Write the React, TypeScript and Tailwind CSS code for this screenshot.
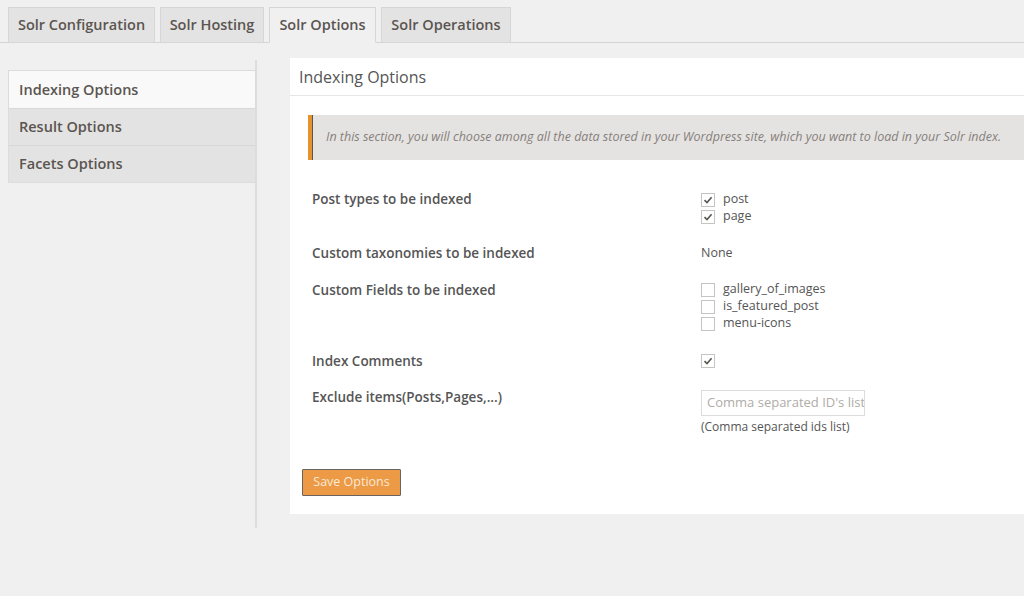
import React from "react";

const font = { fontFamily: '"Open Sans", "Liberation Sans", sans-serif' };

const tabs = [
  { name: "Solr Configuration", w: "w-[147px]" },
  { name: "Solr Hosting", w: "w-[104px]" },
  { name: "Solr Options", w: "w-[107px]", active: true },
  { name: "Solr Operations", w: "w-[130px]" },
];

const sideItems = [
  { name: "Indexing Options", active: true },
  { name: "Result Options" },
  { name: "Facets Options" },
];

function Check({ checked }: { checked?: boolean }) {
  return (
    <span className="w-[14px] h-[14px] border border-[#c4c4c4] bg-white flex items-center justify-center shrink-0">
      {checked && (
        <svg width="10" height="10" viewBox="0 0 10 10">
          <path d="M1.5 5.2 L4 7.6 L8.6 2.2" fill="none" stroke="#5a5550" strokeWidth="1.6" />
        </svg>
      )}
    </span>
  );
}

function CheckLine({ label, checked }: { label: string; checked?: boolean }) {
  return (
    <div className="h-[17px] flex items-center gap-[8px]">
      <Check checked={checked} />
      <span className="text-[12.5px] text-[#555]">{label}</span>
    </div>
  );
}

function Row({ label, h, children }: { label: string; h: string; children?: React.ReactNode }) {
  return (
    <div className={`flex ${h}`}>
      <div className="w-[411px] shrink-0 pl-[22px] text-[13.5px] font-semibold text-[#555] leading-[20px]">{label}</div>
      <div className="flex-1">{children}</div>
    </div>
  );
}

export default function App() {
  return (
    <div className="w-[1024px] h-[596px] bg-[#f1f0f1] overflow-hidden" style={font}>
      {/* tabs */}
      <div className="flex gap-[5px] pl-2 pt-[7px] border-b border-[#d4d4d4] h-[43px]">
        {tabs.map((t) => (
          <div
            key={t.name}
            className={`${t.w} h-[36px] flex items-center justify-center border border-[#d6d6d6] text-[14.5px] font-semibold text-[#5a5550] ${
              t.active ? "bg-[#f1f0f1] border-b-[#f1f0f1] text-[#4a4540]" : "bg-[#e4e3e3]"
            }`}
          >
            {t.name}
          </div>
        ))}
      </div>

      <div className="flex">
        {/* sidebar */}
        <div className="w-[257px] h-[468px] mt-[17px] border-r-2 border-[#dedddd] pl-2 pt-[10px]">
          <div className="w-[248px] border border-[#dcdcdc]">
            {sideItems.map((s, i) => (
              <div
                key={s.name}
                className={`h-[37px] flex items-center pl-[10px] text-[14.5px] font-semibold text-[#5a5550] ${
                  i > 0 ? "border-t border-[#d8d8d8]" : ""
                } ${s.active ? "bg-[#f9f9f9] text-[#4a4540]" : "bg-[#e4e3e3]"}`}
              >
                {s.name}
              </div>
            ))}
          </div>
        </div>

        {/* content */}
        <div className="flex-1 ml-[33px] mt-[15px] h-[456px] bg-white">
          <div className="h-[38px] px-[9px] flex items-center border-b border-[#e6e6e6] text-[16px] text-[#555]">
            Indexing Options
          </div>
          <div className="mt-[19px] ml-[18px] h-[45px] bg-[#e5e3e1] flex items-center border-l-[4px] border-[#e8922e] shadow-[inset_1px_0_0_#5a5550]">
            <span className="pl-[14px] text-[12.5px] italic text-[#85807b]">
              In this section, you will choose among all the data stored in your Wordpress site, which you want to load in your Solr index.
            </span>
          </div>

          <div className="mt-[29px]">
            <Row label="Post types to be indexed" h="h-[54px]">
              <div className="pt-[2px]">
                <CheckLine label="post" checked />
                <CheckLine label="page" checked />
              </div>
            </Row>
            <Row label="Custom taxonomies to be indexed" h="h-[37px]">
              <div className="text-[12.5px] text-[#555] leading-[20px]">None</div>
            </Row>
            <Row label="Custom Fields to be indexed" h="h-[71px]">
              <div className="pt-[1px]">
                <CheckLine label="gallery_of_images" />
                <CheckLine label="is_featured_post" />
                <CheckLine label="menu-icons" />
              </div>
            </Row>
            <Row label="Index Comments" h="h-[36px]">
              <div className="h-[20px] flex items-center">
                <Check checked />
              </div>
            </Row>
            <Row label="Exclude items(Posts,Pages,...)" h="h-[70px]">
              <div className="pt-[3px]">
                <div className="w-[164px] h-[26px] border border-[#dcdcdc] flex items-center pl-[5px] text-[13px] text-[#b0aca8] overflow-hidden whitespace-nowrap">
                  Comma separated ID's list
                </div>
                <div className="mt-[2px] text-[12px] text-[#555] leading-[18px]">(Comma separated ids list)</div>
              </div>
            </Row>
          </div>

          <div className="ml-[12px] mt-[11px]">
            <button className="w-[99px] h-[27px] bg-[#ec9a45] border border-[#6a6460] text-[12.5px] text-[#fbe9d6] rounded-[1px]">
              Save Options
            </button>
          </div>
        </div>
      </div>
    </div>
  );
}
